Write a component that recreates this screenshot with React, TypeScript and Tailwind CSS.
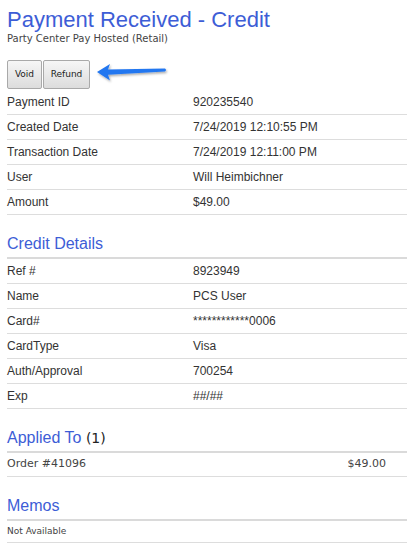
import React from "react";

const payment = [
  ["Payment ID", "920235540"],
  ["Created Date", "7/24/2019 12:10:55 PM"],
  ["Transaction Date", "7/24/2019 12:11:00 PM"],
  ["User", "Will Heimbichner"],
  ["Amount", "$49.00"],
];

const credit = [
  ["Ref #", "8923949"],
  ["Name", "PCS User"],
  ["Card#", "************0006"],
  ["CardType", "Visa"],
  ["Auth/Approval", "700254"],
  ["Exp", "##/##"],
];

function Row({ label, value }: { label: string; value: string }) {
  return (
    <div className="flex h-[25px] items-center border-b border-[#dddddd] font-['Liberation_Sans',Arial,sans-serif] text-[12px] text-[#333]">
      <div className="w-[186px]">{label}</div>
      <div>{value}</div>
    </div>
  );
}

function Heading({ children }: { children: React.ReactNode }) {
  return (
    <h2 className="mt-[19px] border-b-2 border-[#dadada] pb-[3px] font-['Liberation_Sans',Arial,sans-serif] text-[16px] leading-[20px] text-[#3d5dd6]">
      {children}
    </h2>
  );
}

function Arrow() {
  return (
    <svg width="76" height="24" viewBox="0 0 76 24" className="ml-[4px] mt-[1px]">
      <defs>
        <filter id="sh" x="-10%" y="-30%" width="130%" height="180%">
          <feDropShadow dx="1" dy="1.5" stdDeviation="1" floodColor="#000" floodOpacity="0.35" />
        </filter>
      </defs>
      <path
        d="M3 11 L16 3 L14 8.6 L71 7.4 Q73 8.6 71 10.4 L14 13.8 L16 19.5 Z"
        fill="#2477f0"
        filter="url(#sh)"
      />
    </svg>
  );
}

const btn =
  "h-[29px] rounded-[2px] border border-[#a9a9a9] bg-gradient-to-b from-[#f6f6f6] to-[#dcdcdc] font-['DejaVu_Sans',Verdana,sans-serif] text-[9px] text-[#222]";

export default function App() {
  return (
    <div className="min-h-[551px] bg-white pl-[7px] pr-[5px] pt-[7px]">
      <h1 className="font-['Liberation_Sans',Arial,sans-serif] text-[22px] leading-[26px] text-[#3d5dd6]">
        Payment Received - Credit
      </h1>
      <p className="font-['DejaVu_Sans',Verdana,sans-serif] text-[10px] leading-[12px] text-[#444]">
        Party Center Pay Hosted (Retail)
      </p>

      <div className="mt-[15px] flex items-start">
        <button className={`${btn} w-[35px]`}>Void</button>
        <button className={`${btn} ml-[1px] w-[47px]`}>Refund</button>
        <Arrow />
      </div>

      <div className="mt-[1px]">
        {payment.map(([l, v]) => (
          <Row key={l} label={l} value={v} />
        ))}
      </div>

      <Heading>Credit Details</Heading>
      <div>
        {credit.map(([l, v]) => (
          <Row key={l} label={l} value={v} />
        ))}
      </div>

      <Heading>
        Applied To{" "}
        <span className="font-['DejaVu_Sans',Verdana,sans-serif] text-[14px] text-[#222]">(1)</span>
      </Heading>
      <div className="flex h-[24px] items-center border-b border-[#dddddd] font-['DejaVu_Sans',Verdana,sans-serif] text-[11px] text-[#444]">
        <div className="flex-1">Order #41096</div>
        <div className="pr-[21px]">$49.00</div>
      </div>

      <Heading>Memos</Heading>
      <div className="flex h-[22px] items-center border-b border-[#dddddd] font-['DejaVu_Sans',Verdana,sans-serif] text-[9px] text-[#444]">
        Not Available
      </div>
    </div>
  );
}
